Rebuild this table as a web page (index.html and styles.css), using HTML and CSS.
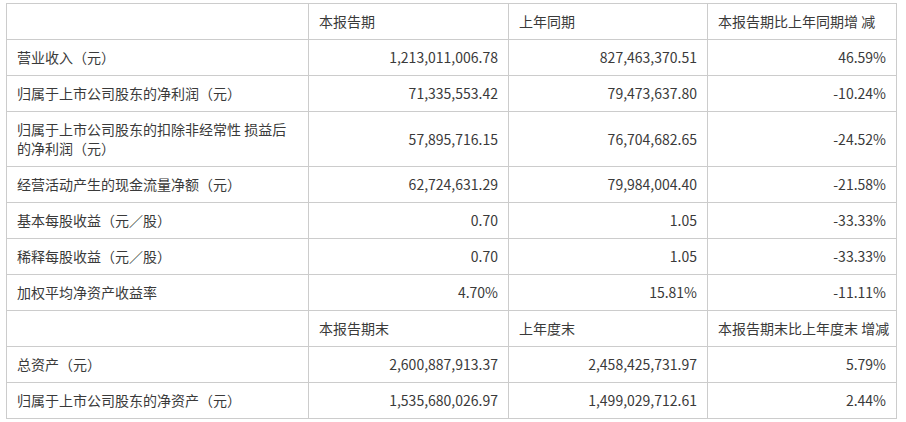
FILE: index.html
```html
<!DOCTYPE html>
<html lang="zh-CN">
<head>
<meta charset="utf-8">
<title>主要财务数据</title>
<link rel="stylesheet" href="styles.css">
</head>
<body>
<table class="fin">
  <colgroup>
    <col class="c1"><col class="c2"><col class="c3"><col class="c4">
  </colgroup>
  <tbody>
    <tr class="head">
      <td></td><td>本报告期</td><td>上年同期</td><td>本报告期比上年同期增 减</td>
    </tr>
    <tr><td>营业收入（元）</td><td class="num">1,213,011,006.78</td><td class="num">827,463,370.51</td><td class="num">46.59%</td></tr>
    <tr><td>归属于上市公司股东的净利润（元）</td><td class="num">71,335,553.42</td><td class="num">79,473,637.80</td><td class="num">-10.24%</td></tr>
    <tr><td>归属于上市公司股东的扣除非经常性 损益后<br>的净利润（元）</td><td class="num">57,895,716.15</td><td class="num">76,704,682.65</td><td class="num">-24.52%</td></tr>
    <tr><td>经营活动产生的现金流量净额（元）</td><td class="num">62,724,631.29</td><td class="num">79,984,004.40</td><td class="num">-21.58%</td></tr>
    <tr><td>基本每股收益（元／股）</td><td class="num">0.70</td><td class="num">1.05</td><td class="num">-33.33%</td></tr>
    <tr><td>稀释每股收益（元／股）</td><td class="num">0.70</td><td class="num">1.05</td><td class="num">-33.33%</td></tr>
    <tr><td>加权平均净资产收益率</td><td class="num">4.70%</td><td class="num">15.81%</td><td class="num">-11.11%</td></tr>
    <tr class="head">
      <td></td><td>本报告期末</td><td>上年度末</td><td>本报告期末比上年度末 增减</td>
    </tr>
    <tr><td>总资产（元）</td><td class="num">2,600,887,913.37</td><td class="num">2,458,425,731.97</td><td class="num">5.79%</td></tr>
    <tr><td>归属于上市公司股东的净资产（元）</td><td class="num">1,535,680,026.97</td><td class="num">1,499,029,712.61</td><td class="num">2.44%</td></tr>
  </tbody>
</table>
</body>
</html>
```
FILE: styles.css
```css
html, body {
  margin: 0;
  padding: 0;
  background: #ffffff;
}
body {
  padding: 3px 0 0 6px;
  font-family: "Noto Sans CJK SC", "Noto Sans", sans-serif;
  font-size: 14px;
  color: #3a3a3a;
}
.fin {
  border-collapse: collapse;
  table-layout: fixed;
  width: 890px;
}
.c1 { width: 302px; }
.c2 { width: 200px; }
.c3 { width: 199px; }
.c4 { width: 189px; }
.fin td {
  border: 1px solid #cccccc;
  padding: 8px 10px;
  line-height: 19px;
  vertical-align: middle;
  text-align: left;
  white-space: nowrap;
}
.fin td.num {
  text-align: right;
}
```
